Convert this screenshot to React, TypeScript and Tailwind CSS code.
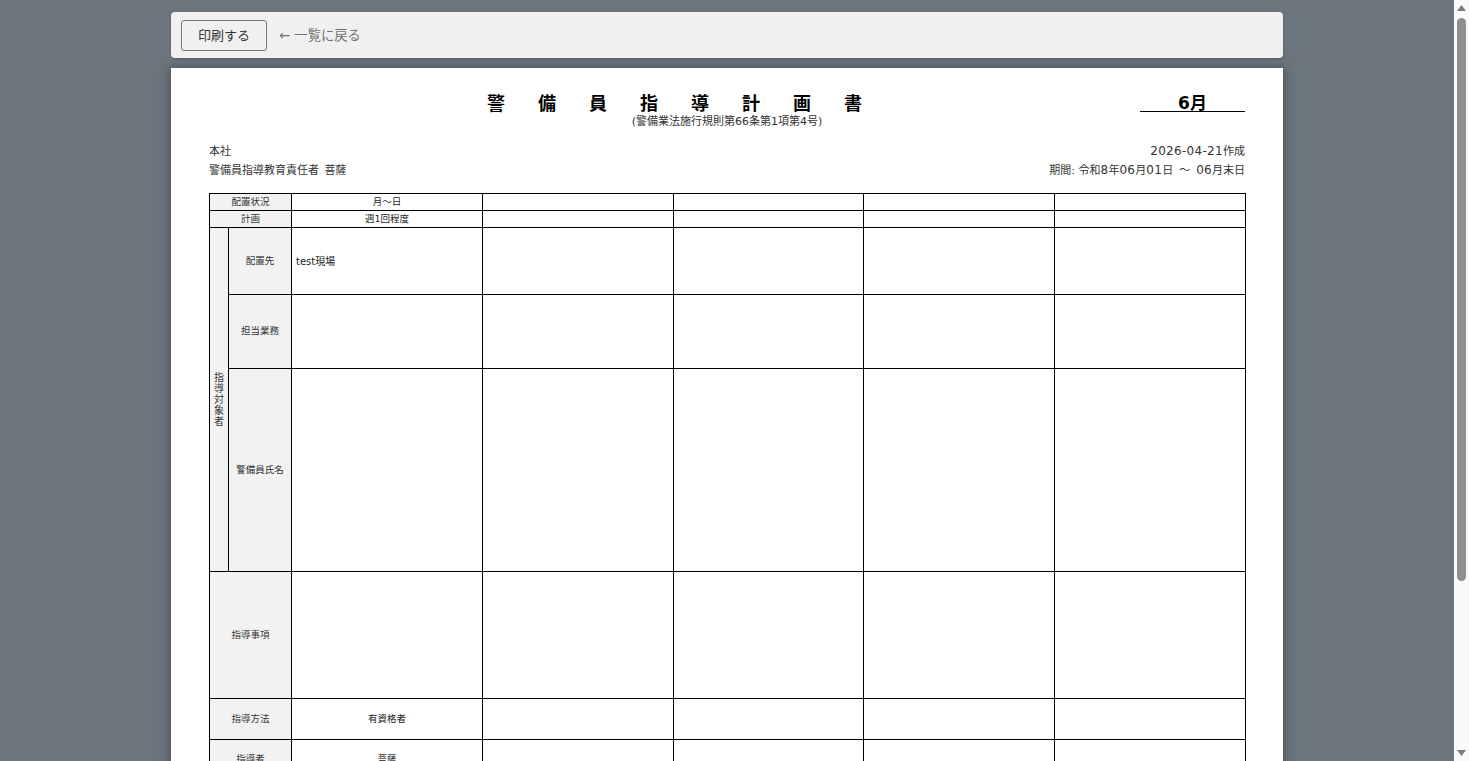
const font = { fontFamily: '"DejaVu Sans", "Noto Sans CJK JP", sans-serif' }

const colWidths = ["w-[19px]", "w-[63px]", "w-[191px]", "w-[191px]", "w-[190px]", "w-[191px]", "w-[191px]"]

const th = "border border-black bg-[#f2f2f2] text-center align-middle font-normal text-[9.5px] text-[#333] p-0"
const td = "border border-black text-center align-middle text-[9.5px] text-[#222] p-0"
const num = "text-[12px] tracking-[0.3px]"

function EmptyCells({ count }: { count: number }) {
    return (
        <>
            {[...Array(count)].map((_, i) => (
                <td key={i} className={td}></td>
            ))}
        </>
    )
}

export default function App() {
    return (
        <div className="flex h-[761px] w-[1469px] overflow-hidden bg-[#6c757d]" style={font}>
            <main className="flex-1 overflow-hidden pt-3">
                <div className="mx-auto w-[1112px]">
                    {/* Toolbar */}
                    <div className="flex h-[46px] items-center gap-3 rounded-[4px] bg-[#f0f0f0] px-[10px] shadow-[0_1px_3px_rgba(0,0,0,0.2)]">
                        <button className="h-[31px] w-[86px] rounded-[3px] border border-[#767676] pt-px text-[13px] text-[#333]">
                            印刷する
                        </button>
                        <a className="pt-px text-[13.3px] text-[#707070]">← 一覧に戻る</a>
                    </div>

                    {/* Sheet */}
                    <div className="mt-[10px] h-[800px] bg-white px-[38px] pt-[25px] shadow-[0_0_10px_rgba(0,0,0,0.4)]">
                        <div className="flex items-start justify-between">
                            <h1 className="ml-[278px] whitespace-nowrap text-[18px] font-bold leading-[22px] tracking-[33px] text-black">
                                警備員指導計画書
                            </h1>
                            <div className="h-[19px] w-[105px] border-b border-black text-center text-[17px] font-semibold leading-[20px] text-black">
                                6月
                            </div>
                        </div>
                        <p className="text-center text-[11px] leading-[14px] text-[#333]">
                            (警備業法施行規則第66条第1項第4号)
                        </p>

                        <div className="mt-[13px] flex justify-between text-[11px] leading-[19px] text-[#333]">
                            <div>
                                <div>本社</div>
                                <div>警備員指導教育責任者 <span className="ml-[2px]">菩薩</span></div>
                            </div>
                            <div className="text-right">
                                <div><span className={num}>2026-04-21</span>作成</div>
                                <div>
                                    期間: 令和<span className={num}>8</span>年<span className={num}>06</span>月<span className={num}>01</span>日
                                    <span className="mx-[6px]">～</span>
                                    <span className={num}>06</span>月末日
                                </div>
                            </div>
                        </div>

                        <table className="mt-[13px] w-[1037px] table-fixed border-collapse border border-black">
                            <colgroup>
                                {colWidths.map((w, i) => (
                                    <col key={i} className={w} />
                                ))}
                            </colgroup>
                            <tbody>
                                <tr className="h-[17px]">
                                    <th colSpan={2} className={th}>配置状況</th>
                                    <td className={td}>月～日</td>
                                    <EmptyCells count={4} />
                                </tr>
                                <tr className="h-[17px]">
                                    <th colSpan={2} className={th}>計画</th>
                                    <td className={td}>週1回程度</td>
                                    <EmptyCells count={4} />
                                </tr>
                                <tr className="h-[67px]">
                                    <th rowSpan={3} className={th}>
                                        <span className="mr-[2px] mt-[5px] inline-block text-[10px] leading-[11px] tracking-[1px] [writing-mode:vertical-rl]">指導対象者</span>
                                    </th>
                                    <th className={th}>配置先</th>
                                    <td className={td + " pl-1 !text-left !text-[10px]"}>test現場</td>
                                    <EmptyCells count={4} />
                                </tr>
                                <tr className="h-[74px]">
                                    <th className={th}>担当業務</th>
                                    <EmptyCells count={5} />
                                </tr>
                                <tr className="h-[203px]">
                                    <th className={th}>警備員氏名</th>
                                    <EmptyCells count={5} />
                                </tr>
                                <tr className="h-[127px]">
                                    <th colSpan={2} className={th}>指導事項</th>
                                    <EmptyCells count={5} />
                                </tr>
                                <tr className="h-[41px]">
                                    <th colSpan={2} className={th}>指導方法</th>
                                    <td className={td}>有資格者</td>
                                    <EmptyCells count={4} />
                                </tr>
                                <tr className="h-[39px]">
                                    <th colSpan={2} className={th}>指導者</th>
                                    <td className={td}>菩薩</td>
                                    <EmptyCells count={4} />
                                </tr>
                            </tbody>
                        </table>
                    </div>
                </div>
            </main>

            {/* Scrollbar */}
            <aside className="flex w-[15px] flex-col items-center bg-[#fafafa]">
                <svg width="9" height="6" viewBox="0 0 9 6" className="mt-[5px]">
                    <path d="M4.5 0 L9 6 L0 6 Z" fill="#7a7a7a" />
                </svg>
                <div className="mt-[7px] h-[563px] w-[9px] rounded-full bg-[#8f8f8f]"></div>
                <svg width="9" height="6" viewBox="0 0 9 6" className="mt-auto mb-[5px]">
                    <path d="M0 0 L9 0 L4.5 6 Z" fill="#7a7a7a" />
                </svg>
            </aside>
        </div>
    )
}
